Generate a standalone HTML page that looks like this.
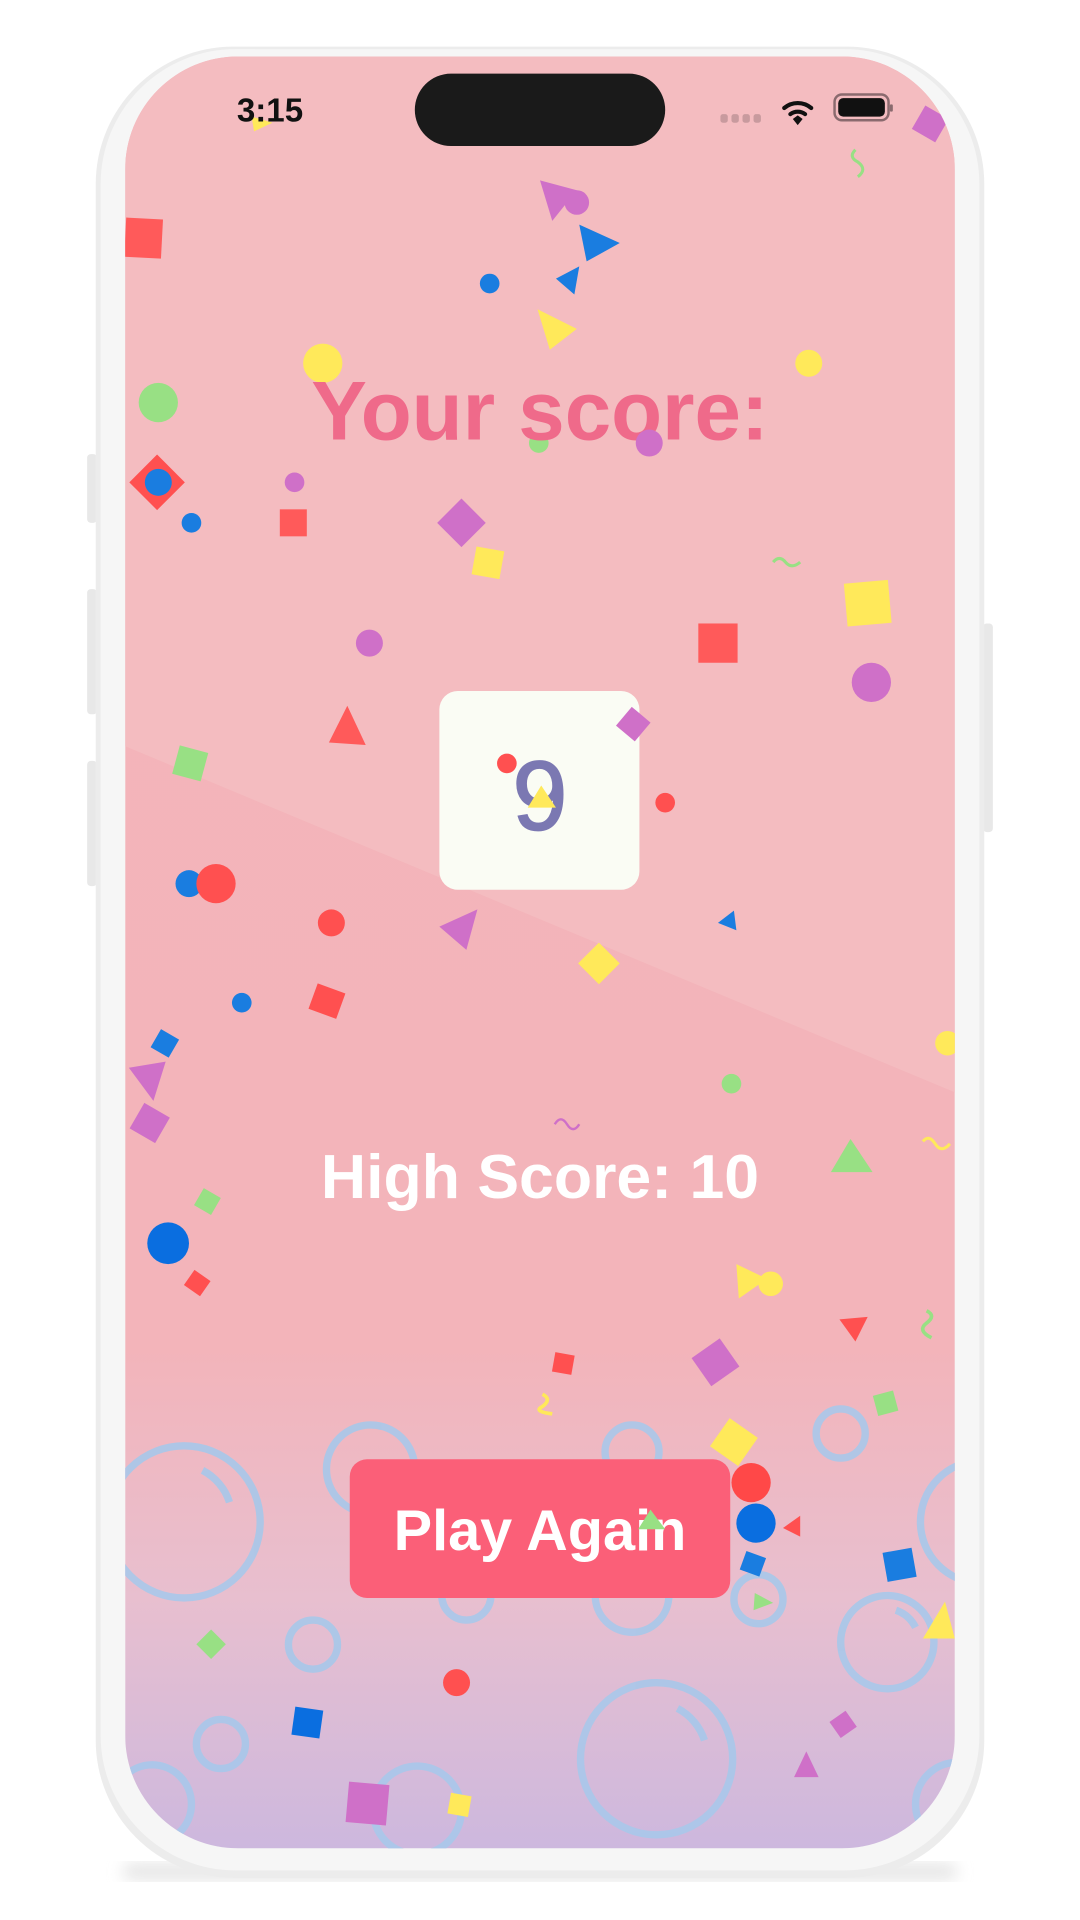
<!DOCTYPE html>
<html><head><meta charset="utf-8"><style>
html,body{margin:0;padding:0;width:1080px;height:1920px;overflow:hidden;background:#fff}
svg{display:block}
</style></head><body>
<svg width="1080" height="1920" viewBox="0 0 880 1564.4" preserveAspectRatio="none" xmlns="http://www.w3.org/2000/svg">
<defs>
<clipPath id="scr"><rect x="102" y="46" width="676" height="1460" rx="92"/></clipPath>
<linearGradient id="bg" x1="0" y1="0" x2="0" y2="1">
<stop offset="0" stop-color="#f4b4b9"/><stop offset="0.72" stop-color="#f3b4ba"/><stop offset="0.86" stop-color="#e8bfcf"/><stop offset="1" stop-color="#cdb8de"/>
</linearGradient>
<filter id="sh" x="-10%" y="-10%" width="120%" height="120%"><feGaussianBlur stdDeviation="6"/></filter>
</defs>
<rect x="100" y="1518" width="680" height="14" rx="7" fill="#e6e6e6" filter="url(#sh)"/>
<rect x="71" y="370" width="8" height="56" rx="3" fill="#e8e8e8"/>
<rect x="71" y="480" width="8" height="102" rx="3" fill="#e8e8e8"/>
<rect x="71" y="620" width="8" height="102" rx="3" fill="#e8e8e8"/>
<rect x="801" y="508" width="8" height="170" rx="3" fill="#e8e8e8"/>
<rect x="78" y="38" width="724" height="1492" rx="112" fill="#ececec"/>
<rect x="82" y="40" width="716" height="1484" rx="110" fill="#f6f6f6"/>
<g clip-path="url(#scr)">
<rect x="102" y="46" width="676" height="1460" fill="url(#bg)"/>
<polygon points="102,46 778,46 778,890 102,608" fill="#f4bcc0"/>
<g fill="none" stroke="#a8c8ea" stroke-width="6" opacity="0.9">
<circle cx="150" cy="1240" r="62"/><path d="M165 1198 a45 45 0 0 1 22 26"/>
<circle cx="302" cy="1197" r="36"/>
<circle cx="515" cy="1183" r="22"/>
<circle cx="685" cy="1168" r="20"/>
<circle cx="800" cy="1240" r="50"/>
<circle cx="380" cy="1300" r="20"/>
<circle cx="515" cy="1300" r="30"/>
<circle cx="618" cy="1303" r="20"/>
<circle cx="255" cy="1340" r="20"/>
<circle cx="723" cy="1338" r="38"/><path d="M730 1312 a28 28 0 0 1 16 14"/>
<circle cx="535" cy="1433" r="62"/><path d="M552 1392 a45 45 0 0 1 22 26"/>
<circle cx="180" cy="1421" r="20"/>
<circle cx="124" cy="1470" r="32"/>
<circle cx="340" cy="1475" r="36"/>
<circle cx="780" cy="1470" r="34"/>
</g>
<g>
<rect x="102" y="178" width="30" height="32" fill="#ff5a5a" transform="rotate(3 117 194)"/>
<polygon points="440,147 470,155 450,180" fill="#cf70c8"/><circle cx="470" cy="165" r="10" fill="#cf70c8"/>
<polygon points="472,183 505,198 478,213" fill="#1a7de0"/><polygon points="453,227 472,217 468,240" fill="#1a7de0"/>
<circle cx="399" cy="231" r="8" fill="#1a7de0"/>
<polygon points="438,252 470,268 448,285" fill="#ffe95a"/>
<circle cx="263" cy="296" r="16" fill="#ffe95a"/><circle cx="659" cy="296" r="11" fill="#ffe95a"/>
<circle cx="129" cy="328" r="16" fill="#98e084"/>
<rect x="112" y="377" width="32" height="32" fill="#ff5050" transform="rotate(45 128 393)"/><circle cx="129" cy="393" r="11" fill="#1a7de0"/>
<circle cx="156" cy="426" r="8" fill="#1a7de0"/><circle cx="240" cy="393" r="8" fill="#cf70c8"/>
<rect x="228" y="415" width="22" height="22" fill="#ff5a5a"/>
<rect x="362" y="412" width="28" height="28" fill="#cf70c8" transform="rotate(45 376 426)"/>
<rect x="386" y="447" width="23" height="23" fill="#ffe95a" transform="rotate(10 397 459)"/>
<circle cx="439" cy="361" r="8" fill="#98e084"/>
<circle cx="301" cy="524" r="11" fill="#cf70c8"/>
<rect x="569" y="508" width="32" height="32" fill="#ff5a5a"/>
<rect x="689" y="474" width="36" height="35" fill="#ffe95a" transform="rotate(-5 707 491)"/>
<circle cx="710" cy="556" r="16" fill="#cf70c8"/>
<polygon points="283,575 298,607 268,605" fill="#ff5a5a"/>
<rect x="143" y="610" width="24" height="24" fill="#98e084" transform="rotate(15 155 622)"/>
<circle cx="542" cy="654" r="8" fill="#ff5050"/>
<circle cx="154" cy="720" r="11" fill="#1a7de0"/><circle cx="176" cy="720" r="16" fill="#ff5050"/>
<circle cx="270" cy="752" r="11" fill="#ff5050"/>
<polygon points="358,755 389,741 380,774" fill="#cf70c8"/>
<polygon points="585,752 598,742 600,758" fill="#1a7de0"/>
<rect x="476" y="773" width="24" height="24" fill="#ffe95a" transform="rotate(45 488 785)"/>
<circle cx="197" cy="817" r="8" fill="#1a7de0"/>
<rect x="254" y="805" width="24" height="22" fill="#ff5050" transform="rotate(20 267 817)"/>
<rect x="126" y="842" width="17" height="17" fill="#1a7de0" transform="rotate(30 135 850)"/>
<polygon points="105,870 135,865 125,897" fill="#cf70c8"/>
<rect x="110" y="903" width="24" height="24" fill="#cf70c8" transform="rotate(30 122 915)"/>
<circle cx="772" cy="850" r="10" fill="#ffe95a"/>
<circle cx="596" cy="883" r="8" fill="#98e084"/>
<polygon points="693,928 711,955 677,955" fill="#98e084"/>
<path d="M452 916 q5 -8 10 0 q5 8 10 0" stroke="#cf70c8" stroke-width="2" fill="none"/>
<path d="M752 930 q5 -6 10 2 q5 8 12 0" stroke="#ffe95a" stroke-width="2.5" fill="none"/>
<circle cx="137" cy="1013" r="17" fill="#0a6ee0"/>
<rect x="161" y="971" width="16" height="16" fill="#98e084" transform="rotate(30 169 979)"/>
<rect x="153" y="1038" width="16" height="15" fill="#ff5050" transform="rotate(35 161 1045)"/>
<polygon points="600,1030 625,1042 602,1058" fill="#ffe95a"/><circle cx="628" cy="1046" r="10" fill="#ffe95a"/>
<polygon points="684,1075 707,1073 697,1093" fill="#ff5050"/>
<rect x="569" y="1096" width="28" height="28" fill="#cf70c8" transform="rotate(55 583 1110)"/>
<rect x="451" y="1103" width="16" height="16" fill="#ff5050" transform="rotate(10 459 1111)"/>
<rect x="713" y="1135" width="17" height="17" fill="#98e084" transform="rotate(-15 721 1143)"/>
<path d="M755 1068 q8 4 0 10 q-8 6 4 12" stroke="#98e084" stroke-width="3" fill="none"/>
<path d="M442 1136 q8 4 0 10 q-8 4 8 6" stroke="#ffe95a" stroke-width="3" fill="none"/>
<rect x="584" y="1161" width="28" height="28" fill="#ffe95a" transform="rotate(35 598 1175)"/>
<polygon points="638,1245 652,1235 652,1252" fill="#ff5050"/>
<rect x="605" y="1266" width="17" height="16" fill="#1a7de0" transform="rotate(20 613 1274)"/>
<rect x="721" y="1263" width="24" height="24" fill="#1a7de0" transform="rotate(-10 733 1275)"/>
<polygon points="770,1305 778,1335 752,1335" fill="#ffe95a"/>
<polygon points="615,1298 630,1306 614,1312" fill="#98e084"/>
<rect x="164" y="1331" width="17" height="17" fill="#98e084" transform="rotate(45 172 1339)"/>
<circle cx="372" cy="1371" r="11" fill="#ff5050"/>
<rect x="239" y="1392" width="23" height="23" fill="#0a6ee0" transform="rotate(8 250 1403)"/>
<rect x="679" y="1397" width="16" height="16" fill="#cf70c8" transform="rotate(55 687 1405)"/>
<polygon points="657,1427 667,1448 647,1448" fill="#cf70c8"/>
<rect x="283" y="1453" width="33" height="33" fill="#cf70c8" transform="rotate(5 299 1469)"/>
<rect x="366" y="1462" width="17" height="17" fill="#ffe95a" transform="rotate(10 374 1470)"/>
<rect x="747" y="90" width="22" height="22" fill="#cf70c8" transform="rotate(30 758 101)"/>
<path d="M697 122 q-6 6 2 10 q8 6 0 12" stroke="#98e084" stroke-width="2.5" fill="none"/>
<path d="M630 458 q5 -6 10 0 q5 6 12 0" stroke="#98e084" stroke-width="2.5" fill="none"/>
<polygon points="205,95 222,100 207,107" fill="#ffe95a"/>
</g>
<text x="440" y="358" text-anchor="middle" font-family="Liberation Sans, sans-serif" font-weight="bold" font-size="68" fill="#ef6a8a">Your score:</text>
<circle cx="529" cy="361" r="11" fill="#cf70c8"/>
<rect x="358" y="563" width="163" height="162" rx="15" fill="#fafcf4"/>
<text x="440" y="676" text-anchor="middle" font-family="Liberation Sans, sans-serif" font-size="80" fill="#7b78b2" stroke="#7b78b2" stroke-width="1.5">9</text>
<circle cx="413" cy="622" r="8" fill="#ff5050"/>
<polygon points="441,640 453,658 430,658" fill="#ffe95a"/>
<rect x="506" y="580" width="20" height="20" fill="#cf70c8" transform="rotate(40 516 590)"/>
<text x="440" y="976" text-anchor="middle" font-family="Liberation Sans, sans-serif" font-weight="bold" font-size="51" fill="#ffffff">High Score: 10</text>
<rect x="285" y="1189" width="310" height="113" rx="14" fill="#fb5f78"/>
<text x="440" y="1263" text-anchor="middle" font-family="Liberation Sans, sans-serif" font-weight="bold" font-size="47" fill="#ffffff">Play Again</text>
<polygon points="530,1230 542,1246 520,1246" fill="#98e084"/>
<circle cx="612" cy="1208" r="16" fill="#ff4848"/><circle cx="616" cy="1241" r="16" fill="#0a6ee0"/>
<text x="193" y="99" font-family="Liberation Sans, sans-serif" font-weight="bold" font-size="27" fill="#111">3:15</text>
<rect x="338" y="60" width="204" height="59" rx="29.5" fill="#1a1a1a"/>
<g fill="#c89a9e"><rect x="587" y="93" width="6" height="7" rx="2"/><rect x="596" y="93" width="6" height="7" rx="2"/><rect x="605" y="93" width="6" height="7" rx="2"/><rect x="614" y="93" width="6" height="7" rx="2"/></g>
<g fill="none" stroke="#111" stroke-width="3.4" stroke-linecap="round">
<path d="M639 88 a17 17 0 0 1 22 0"/><path d="M644 93 a10 10 0 0 1 12 0"/>
</g>
<path d="M646 97 l4 -3 l4 3 l-4 5 z" fill="#111"/>
<rect x="680" y="77" width="44" height="21" rx="6" fill="none" stroke="#8a6a6e" stroke-width="2"/>
<rect x="683" y="80" width="38" height="15" rx="4" fill="#111"/>
<rect x="725" y="85" width="2.5" height="6" rx="1" fill="#8a6a6e"/>
</g>
</svg>
</body></html>
